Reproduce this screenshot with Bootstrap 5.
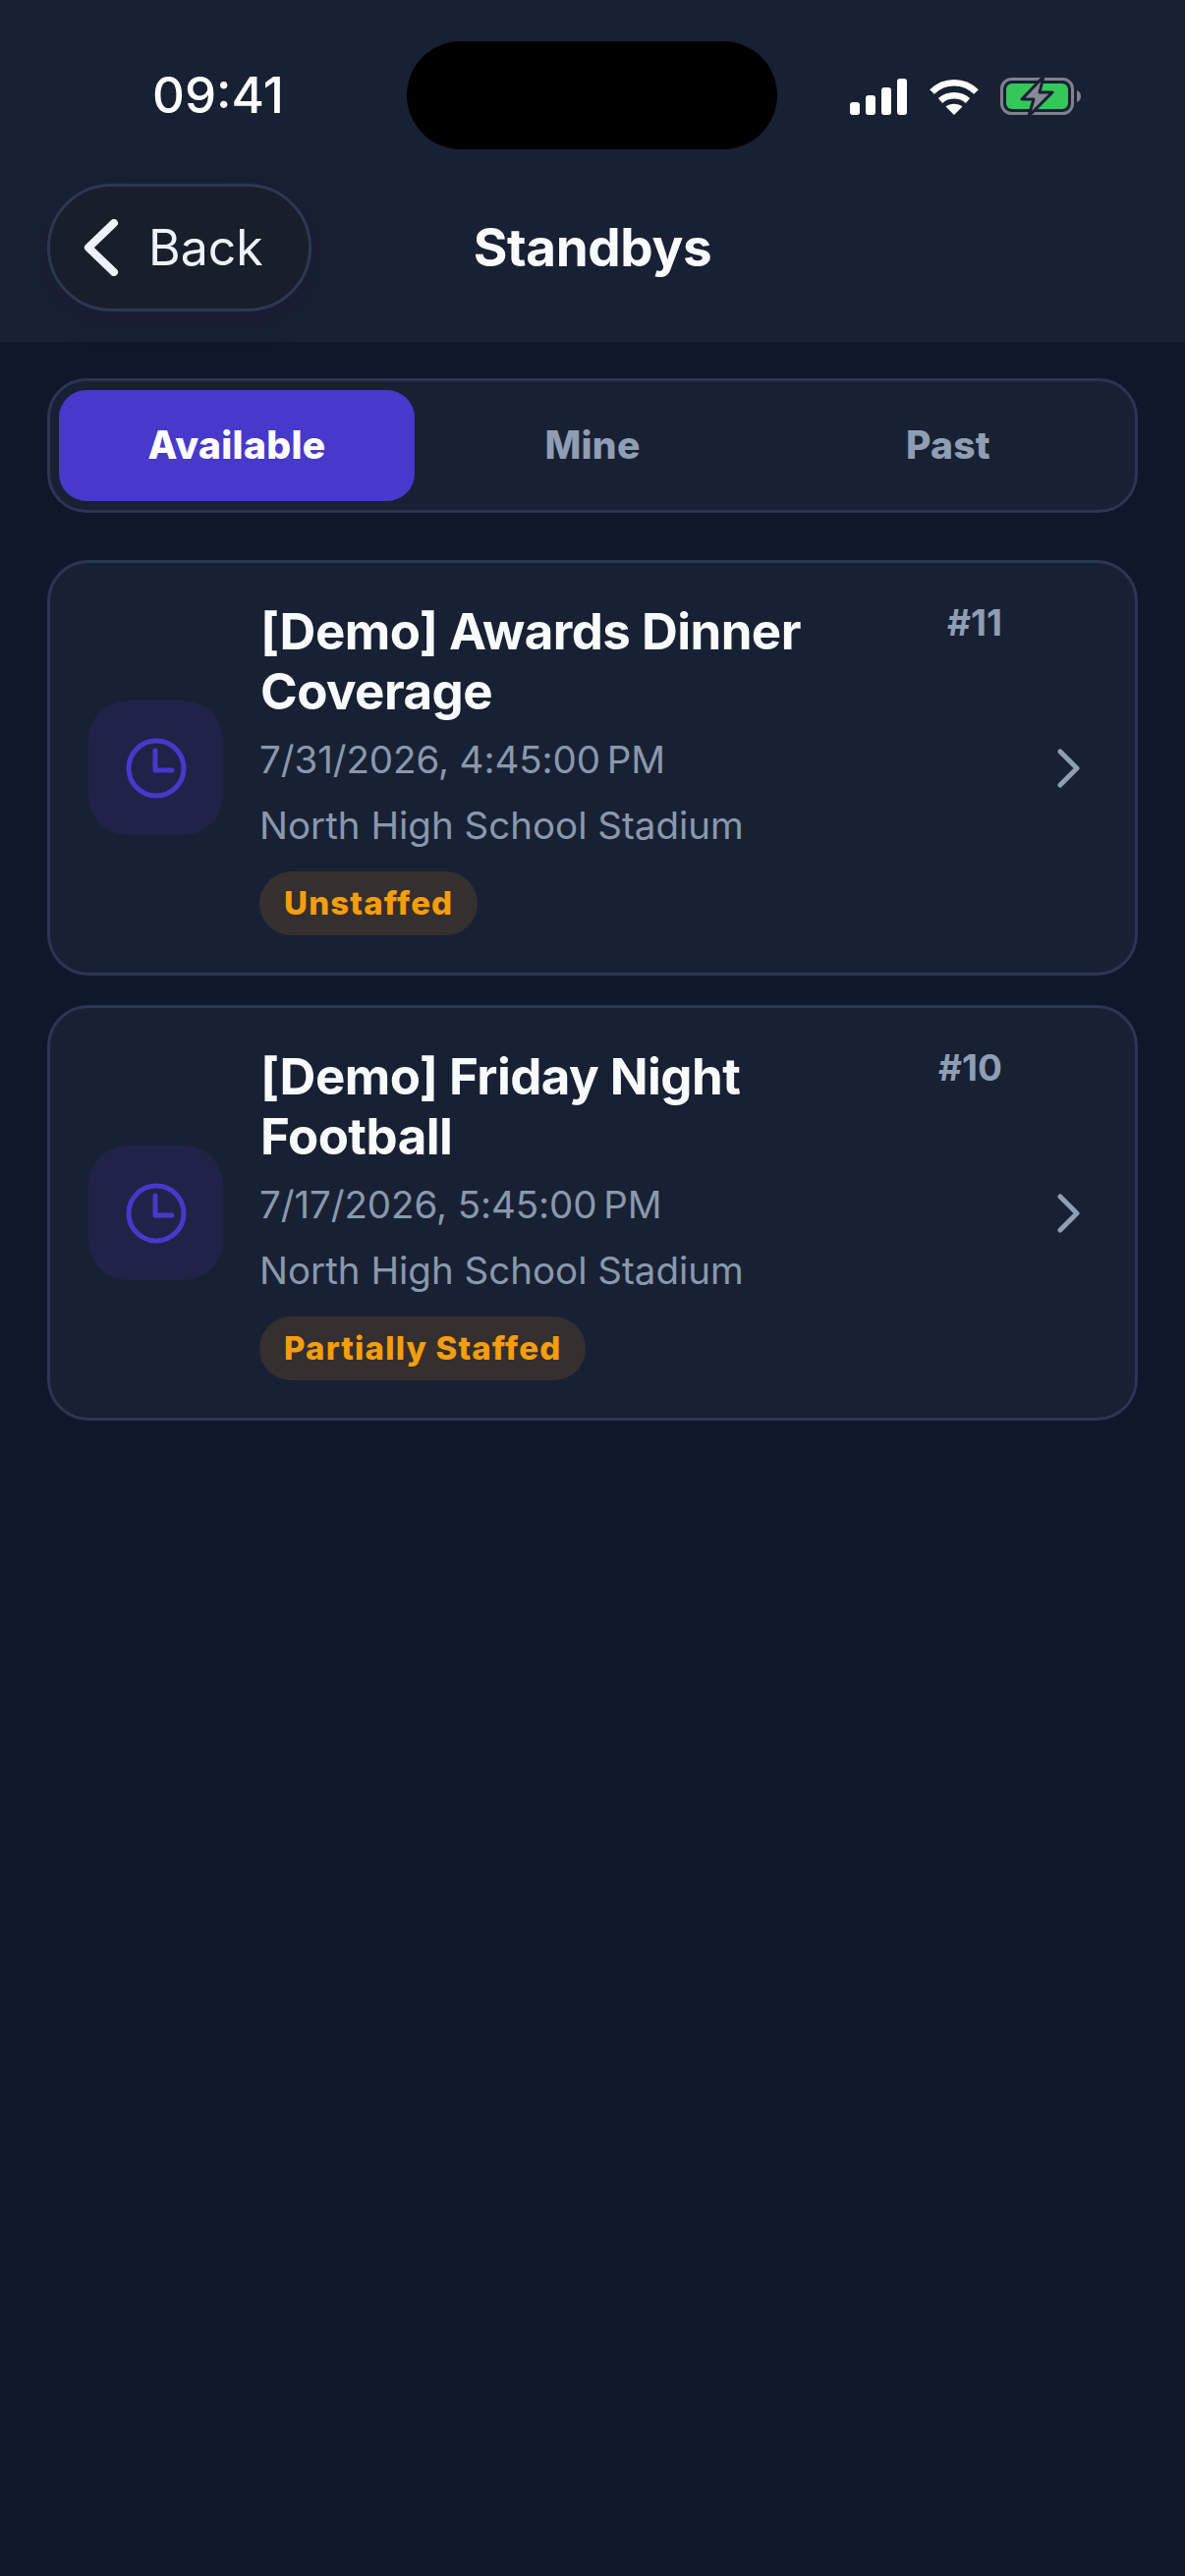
<!DOCTYPE html>
<html lang="en">
<head>
  <meta charset="UTF-8">
  <meta name="viewport" content="width=device-width, initial-scale=1.0">
  <title>Standbys</title>
  <link rel="stylesheet" href="https://cdn.jsdelivr.net/npm/bootstrap@5.3.2/dist/css/bootstrap.min.css"/>
  <style>
    body { background: #0f172a; font-family: Inter, "Liberation Sans", sans-serif; width: 1206px; min-height: 2622px; }
    .top-head { background: #182133; height: 348px; }
    .status-row { height: 187px; padding-top: 42px; align-items: flex-start; }
    .clock-txt { margin-left: 155px; margin-top: 27px; width: 135px; font-size: 51px; line-height: 56px; font-weight: 500; color: #fff; }
    .island { margin-left: 124px; width: 377px; height: 110px; border-radius: 55px; background: #000; }
    .status-icons { margin-left: 74px; margin-top: 36px; gap: 23px; }
    .head-row { display: grid; grid-template-columns: 1fr auto 1fr; align-items: center; height: 130px; padding: 0 48px; }
    .back-btn { width: 269px; height: 130px; border: 3px solid #2b3855; border-radius: 65px; background: #181e2a; color: #eef2fb; font-size: 50px; line-height: 1; padding: 0 0 0 34px; gap: 30px; box-shadow: 0 8px 28px rgba(30,20,50,.35); justify-content: flex-start; }
    .back-btn:hover { background: #181e2a; color: #eef2fb; border-color: #2b3855; }
    .page-title { font-size: 53px; font-weight: 700; color: #f8fafc; line-height: 60px; margin: 0; letter-spacing: -.4px; }
    .seg-wrap { margin: 37px 48px 0; height: 137px; padding: 9px 9px; border: 3px solid #2b3652; border-radius: 40px; background: #182133; }
    .seg-wrap .nav-link { height: 113px; border-radius: 28px; font-size: 39px; font-weight: 800; color: #8f9eb4; padding: 0; display: flex; align-items: center; justify-content: center; letter-spacing: .3px; }
    .seg-wrap .nav-link.active { background: #4739cb; color: #fff; }
    .job-list { margin: 48px 48px 0; gap: 30px; }
    .job-card { height: 423px; border: 3px solid #2b3652; border-radius: 42px; background: #182133; padding: 0 55px 0 39px; flex-direction: row; align-items: center; }
    .job-ico { width: 137px; height: 137px; border-radius: 40px; background: #1f2348; flex: none; margin-right: 37px; }
    .job-body { flex: 1; min-width: 0; }
    .job-title { font-size: 51px; line-height: 61px; font-weight: 700; color: #f8fafc; margin: 0; letter-spacing: -.55px; padding-left: 1px; }
    .job-num { width: 100px; font-size: 37px; line-height: 44px; font-weight: 700; color: #8f9eb4; text-align: right; margin: 0 -2px 0 0; flex: none; }
    .job-meta { font-size: 38.5px; line-height: 48px; color: #8a98ae; margin: 0; }
    .meta-date { margin-top: 15px; letter-spacing: -.1px; }
    .meta-loc { margin-top: 19px; }
    .staff-tag { display: inline-block; margin-top: 23px; padding: 0 25px; height: 65px; line-height: 65px; border-radius: 33px; background: #352f2f; color: #f59e0b; font-size: 33px; font-weight: 800; letter-spacing: 1.15px; vertical-align: top; }
    .job-arrow { flex: none; margin-left: 56px; }
  </style>
</head>
<body>
  <div class="top-head">
    <div class="status-row d-flex">
      <div class="clock-txt">09:41</div>
      <div class="island"></div>
      <div class="status-icons d-flex align-items-center">
        <svg width="58" height="37" viewBox="0 0 58 37" fill="#fff">
          <rect x="0" y="24" width="10" height="13" rx="3"/>
          <rect x="16" y="17" width="10" height="20" rx="3"/>
          <rect x="32" y="9" width="10" height="28" rx="3"/>
          <rect x="48" y="0" width="10" height="37" rx="3"/>
        </svg>
        <svg width="50" height="37" viewBox="0 0 50 37" fill="none" stroke="#fff" stroke-width="6.5">
          <path d="M2.5 13.5C15 1 35 1 47.5 13.5"/>
          <path d="M11 22.5C18.500 15.500 31.500 15.500 39 22.500"/>
          <path d="M25 37L16.500 28.500C21 24.800 29 24.800 33.500 28.500Z" fill="#fff" stroke="none"/>
        </svg>
        <svg width="82" height="40" viewBox="0 0 82 40" style="margin-left:-1px">
          <rect x="1.500" y="2.500" width="72" height="35" rx="10" fill="none" stroke="#7d828c" stroke-width="3"/>
          <rect x="6" y="7" width="63" height="26" rx="6" fill="#34c759"/>
          <path d="M78 14C81 15 82 17.500 82 20S81 25 78 26Z" fill="#7d828c"/>
          <path d="M44 0L22 23H34L29 40L53 16H40Z" fill="#868a94" stroke="#182133" stroke-width="3" stroke-linejoin="round"/>
        </svg>
      </div>
    </div>
    <div class="head-row">
      <div>
        <button class="btn back-btn d-flex align-items-center" type="button">
          <svg width="36" height="58" viewBox="0 0 36 58" fill="none" stroke="#eef2fb" stroke-width="8" stroke-linecap="round" stroke-linejoin="round">
            <path d="M31 4L5 29L31 54"/>
          </svg>
          <span>Back</span>
        </button>
      </div>
      <h1 class="page-title">Standbys</h1>
      <div></div>
    </div>
  </div>

  <ul class="nav nav-pills nav-justified seg-wrap">
    <li class="nav-item"><a class="nav-link active" href="#">Available</a></li>
    <li class="nav-item"><a class="nav-link" href="#">Mine</a></li>
    <li class="nav-item"><a class="nav-link" href="#">Past</a></li>
  </ul>

  <div class="job-list d-flex flex-column">
    <div class="card job-card">
      <div class="job-ico d-flex align-items-center justify-content-center">
        <svg width="62" height="62" viewBox="0 0 62 62" fill="none" stroke="#4739cb" stroke-width="5" stroke-linecap="round" stroke-linejoin="round">
          <circle cx="31" cy="31" r="28"/>
          <path d="M30 13V33H47"/>
        </svg>
      </div>
      <div class="job-body">
        <div class="d-flex align-items-start">
          <h2 class="job-title flex-grow-1">[Demo] Awards Dinner Coverage</h2>
          <p class="job-num">#11</p>
        </div>
        <p class="job-meta meta-date">7/31/2026, 4:45:00&#8239;PM</p>
        <p class="job-meta meta-loc">North High School Stadium</p>
        <span class="staff-tag">Unstaffed</span>
      </div>
      <svg class="job-arrow" width="26" height="40" viewBox="0 0 26 40" fill="none" stroke="#8f9eb4" stroke-width="5" stroke-linecap="round" stroke-linejoin="round">
        <path d="M5 3L22 20L5 37"/>
      </svg>
    </div>
    <div class="card job-card">
      <div class="job-ico d-flex align-items-center justify-content-center">
        <svg width="62" height="62" viewBox="0 0 62 62" fill="none" stroke="#4739cb" stroke-width="5" stroke-linecap="round" stroke-linejoin="round">
          <circle cx="31" cy="31" r="28"/>
          <path d="M30 13V33H47"/>
        </svg>
      </div>
      <div class="job-body">
        <div class="d-flex align-items-start">
          <h2 class="job-title flex-grow-1">[Demo] Friday Night Football</h2>
          <p class="job-num">#10</p>
        </div>
        <p class="job-meta meta-date">7/17/2026, 5:45:00&#8239;PM</p>
        <p class="job-meta meta-loc">North High School Stadium</p>
        <span class="staff-tag">Partially Staffed</span>
      </div>
      <svg class="job-arrow" width="26" height="40" viewBox="0 0 26 40" fill="none" stroke="#8f9eb4" stroke-width="5" stroke-linecap="round" stroke-linejoin="round">
        <path d="M5 3L22 20L5 37"/>
      </svg>
    </div>
  </div>

  <script src="https://cdn.jsdelivr.net/npm/bootstrap@5.3.2/dist/js/bootstrap.bundle.min.js"></script>
</body>
</html>
